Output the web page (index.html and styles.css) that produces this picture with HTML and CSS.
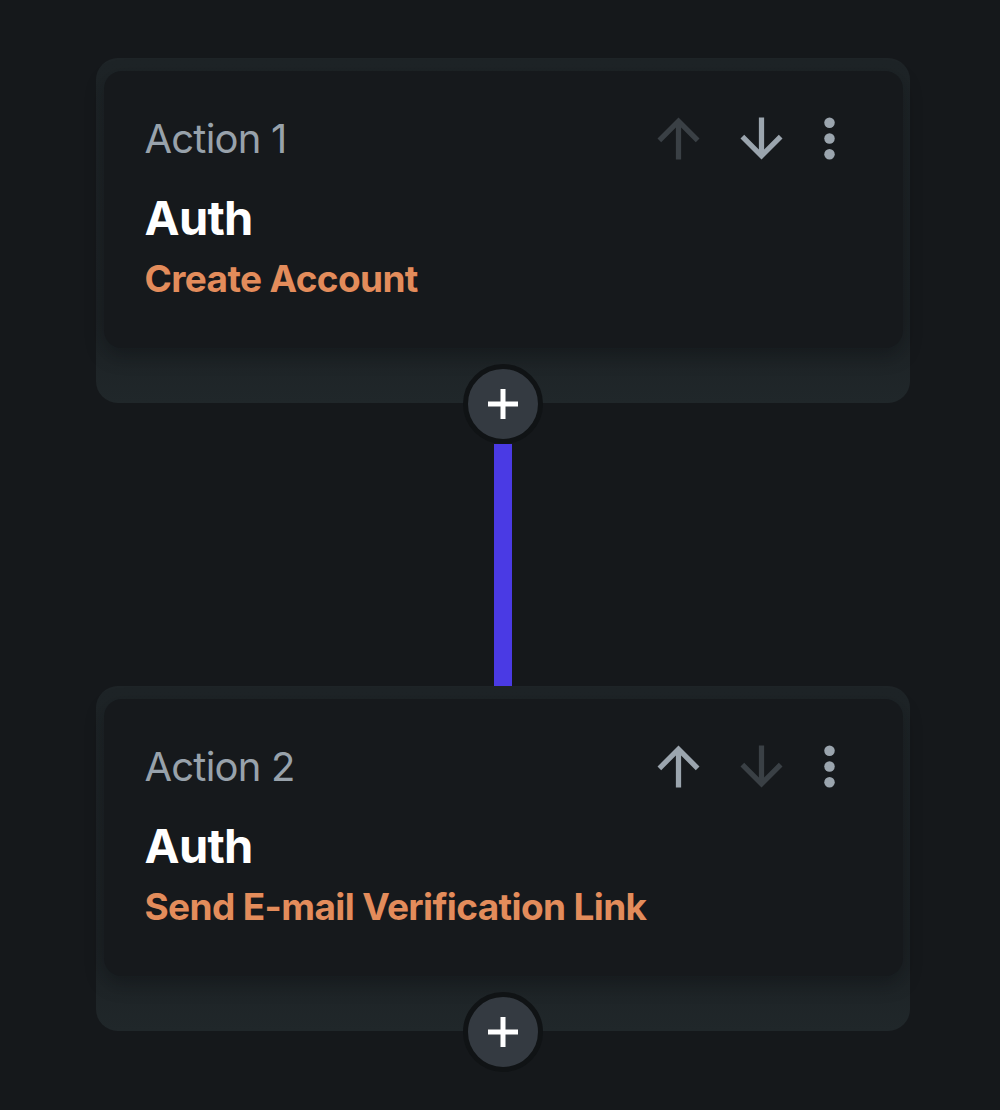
FILE: index.html
```html
<!DOCTYPE html>
<html lang="en">
<head>
<meta charset="utf-8">
<title>Action flow</title>
<link rel="stylesheet" href="styles.css">
</head>
<body>
<main class="flow">
  <section class="step">
    <div class="step-shell">
      <div class="card">
        <div class="card-head">
          <span class="label">Action 1</span>
          <div class="tools">
            <button class="icon-btn disabled" aria-label="Move up">
              <svg viewBox="0 0 24 24"><path d="M4 12l1.41 1.41L11 7.830V20h2V7.83l5.58 5.59L20 12l-8-8-8 8z"/></svg>
            </button>
            <button class="icon-btn" aria-label="Move down">
              <svg viewBox="0 0 24 24"><path d="M20 12l-1.41-1.41L13 16.17V4h-2v12.17l-5.58-5.59L4 12l8 8 8-8z"/></svg>
            </button>
            <button class="icon-btn more" aria-label="More">
              <svg viewBox="0 0 24 24"><circle cx="12" cy="6" r="2"/><circle cx="12" cy="12" r="2"/><circle cx="12" cy="18" r="2"/></svg>
            </button>
          </div>
        </div>
        <div class="title">Auth</div>
        <div class="subtitle">Create Account</div>
      </div>
    </div>
    <button class="add-btn" aria-label="Add action">
      <svg viewBox="0 0 36 36"><path d="M18 3v30M3 18h30"/></svg>
    </button>
  </section>

  <div class="connector"></div>

  <section class="step">
    <div class="step-shell">
      <div class="card">
        <div class="card-head">
          <span class="label">Action 2</span>
          <div class="tools">
            <button class="icon-btn" aria-label="Move up">
              <svg viewBox="0 0 24 24"><path d="M4 12l1.41 1.41L11 7.83V20h2V7.83l5.58 5.59L20 12l-8-8-8 8z"/></svg>
            </button>
            <button class="icon-btn disabled" aria-label="Move down">
              <svg viewBox="0 0 24 24"><path d="M20 12l-1.41-1.41L13 16.17V4h-2v12.17l-5.58-5.59L4 12l8 8 8-8z"/></svg>
            </button>
            <button class="icon-btn more" aria-label="More">
              <svg viewBox="0 0 24 24"><circle cx="12" cy="6" r="2"/><circle cx="12" cy="12" r="2"/><circle cx="12" cy="18" r="2"/></svg>
            </button>
          </div>
        </div>
        <div class="title">Auth</div>
        <div class="subtitle">Send E-mail Verification Link</div>
      </div>
    </div>
    <button class="add-btn" aria-label="Add action">
      <svg viewBox="0 0 36 36"><path d="M18 3v30M3 18h30"/></svg>
    </button>
  </section>
</main>
</body>
</html>
```

FILE: styles.css
```css
* { box-sizing: border-box; }

html, body {
  margin: 0;
  padding: 0;
  background: #15181b;
}

body {
  font-family: "Inter", "Open Sans", sans-serif;
  height: 1110px;
  overflow: hidden;
}

.flow {
  display: flex;
  flex-direction: column;
  align-items: center;
  padding-top: 58px;
  padding-left: 5px;
}

.step {
  width: 814px;
  display: flex;
  flex-direction: column;
  align-items: center;
}

.step-shell {
  width: 100%;
  background: linear-gradient(180deg, #1e2427 0%, #1c2124 75%, #20272a 100%);
  border-radius: 22px;
  padding: 13px 7px 55px 8px;
}

.card {
  height: 277px;
  background: #16191c;
  border-radius: 18px;
  padding: 36px 42px 0 41px;
  box-shadow: 0 8px 18px rgba(10, 12, 14, 0.35);
}

.card-head {
  display: flex;
  align-items: center;
  justify-content: space-between;
  height: 63px;
}

.label {
  font-size: 40px;
  font-weight: 400;
  color: #98a2ab;
  letter-spacing: -0.02em;
  line-height: 1;
}

.tools {
  display: flex;
  align-items: center;
}

.icon-btn {
  width: 63px;
  height: 63px;
  padding: 0;
  border: 0;
  background: none;
  display: flex;
  align-items: center;
  justify-content: center;
  color: #9ba5ae;
}

.icon-btn + .icon-btn { margin-left: 20px; }
.icon-btn.more { margin-left: 5px; }

.icon-btn svg {
  width: 63px;
  height: 63px;
  fill: currentColor;
}

.icon-btn.disabled { color: #3a4045; }

.title {
  margin-top: 23px;
  font-size: 47px;
  line-height: 50px;
  font-weight: 700;
  color: #ffffff;
  letter-spacing: -0.015em;
}

.subtitle {
  margin-top: 14px;
  font-size: 37px;
  line-height: 44px;
  font-weight: 700;
  color: #e38c5b;
  letter-spacing: -0.017em;
}

.add-btn {
  position: relative;
  z-index: 2;
  margin-top: -39px;
  width: 80px;
  height: 80px;
  border-radius: 50%;
  border: 5px solid #101315;
  background: #343a41;
  padding: 0;
  display: flex;
  align-items: center;
  justify-content: center;
}

.add-btn svg {
  width: 36px;
  height: 36px;
  fill: none;
  stroke: #ffffff;
  stroke-width: 5;
}

.connector {
  width: 18px;
  height: 242px;
  background: #4a3ae4;
}
```
